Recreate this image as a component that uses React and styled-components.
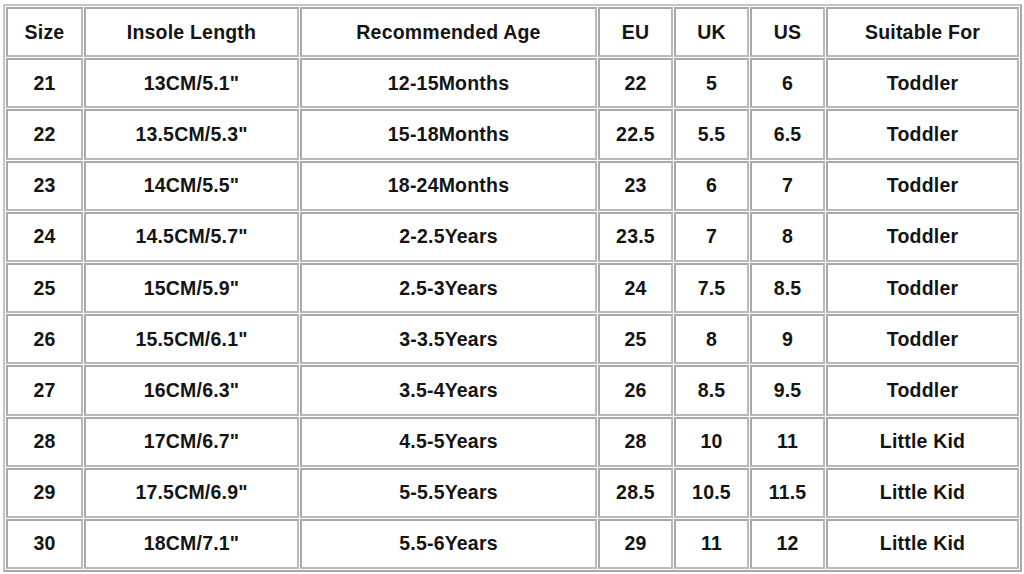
import React from 'react';
import styled, { createGlobalStyle } from 'styled-components';

const GlobalStyle = createGlobalStyle`
  html, body {
    margin: 0;
    padding: 0;
    background: #ffffff;
  }
  body {
    font-family: "Liberation Sans", Arial, sans-serif;
  }
`;

const Page = styled.div`
  width: 1024px;
  height: 574px;
  padding: 4px 0 0 3px;
  box-sizing: border-box;
  background: #ffffff;
`;

const Table = styled.table`
  width: 1018px;
  border-collapse: separate;
  border-spacing: 1px;
  border: 2px solid #c4c4c4;
  border-right-color: #a8a8a8;
  border-bottom-color: #a8a8a8;
  table-layout: fixed;
  box-sizing: border-box;
`;

const Row = styled.tr`
  height: 50.2px;
`;

const Cell = styled.td`
  width: ${(p) => p.$w}px;
  height: 50.2px;
  box-sizing: border-box;
  border: 2px solid #b9b9b9;
  border-top-color: #a9a9a9;
  border-left-color: #a9a9a9;
  padding: 0;
  text-align: center;
  vertical-align: middle;
  font-size: 19.5px;
  font-weight: bold;
  letter-spacing: 0.2px;
  color: #141414;
`;

const HeadCell = styled(Cell).attrs({ as: 'th' })``;

const widths = [77, 215, 297, 75, 75, 75, 193];

const headers = ['Size', 'Insole Length', 'Recommended Age', 'EU', 'UK', 'US', 'Suitable For'];

const rows = [
  ['21', '13CM/5.1"', '12-15Months', '22', '5', '6', 'Toddler'],
  ['22', '13.5CM/5.3"', '15-18Months', '22.5', '5.5', '6.5', 'Toddler'],
  ['23', '14CM/5.5"', '18-24Months', '23', '6', '7', 'Toddler'],
  ['24', '14.5CM/5.7"', '2-2.5Years', '23.5', '7', '8', 'Toddler'],
  ['25', '15CM/5.9"', '2.5-3Years', '24', '7.5', '8.5', 'Toddler'],
  ['26', '15.5CM/6.1"', '3-3.5Years', '25', '8', '9', 'Toddler'],
  ['27', '16CM/6.3"', '3.5-4Years', '26', '8.5', '9.5', 'Toddler'],
  ['28', '17CM/6.7"', '4.5-5Years', '28', '10', '11', 'Little Kid'],
  ['29', '17.5CM/6.9"', '5-5.5Years', '28.5', '10.5', '11.5', 'Little Kid'],
  ['30', '18CM/7.1"', '5.5-6Years', '29', '11', '12', 'Little Kid'],
];

const App = () => {
  return (
    <Page>
      <GlobalStyle />
      <Table>
        <thead>
          <Row>
            {headers.map((h, i) => (
              <HeadCell key={h} $w={widths[i]}>{h}</HeadCell>
            ))}
          </Row>
        </thead>
        <tbody>
          {rows.map((row) => (
            <Row key={row[0]}>
              {row.map((val, i) => (
                <Cell key={i} $w={widths[i]}>{val}</Cell>
              ))}
            </Row>
          ))}
        </tbody>
      </Table>
    </Page>
  );
};

export default App;
